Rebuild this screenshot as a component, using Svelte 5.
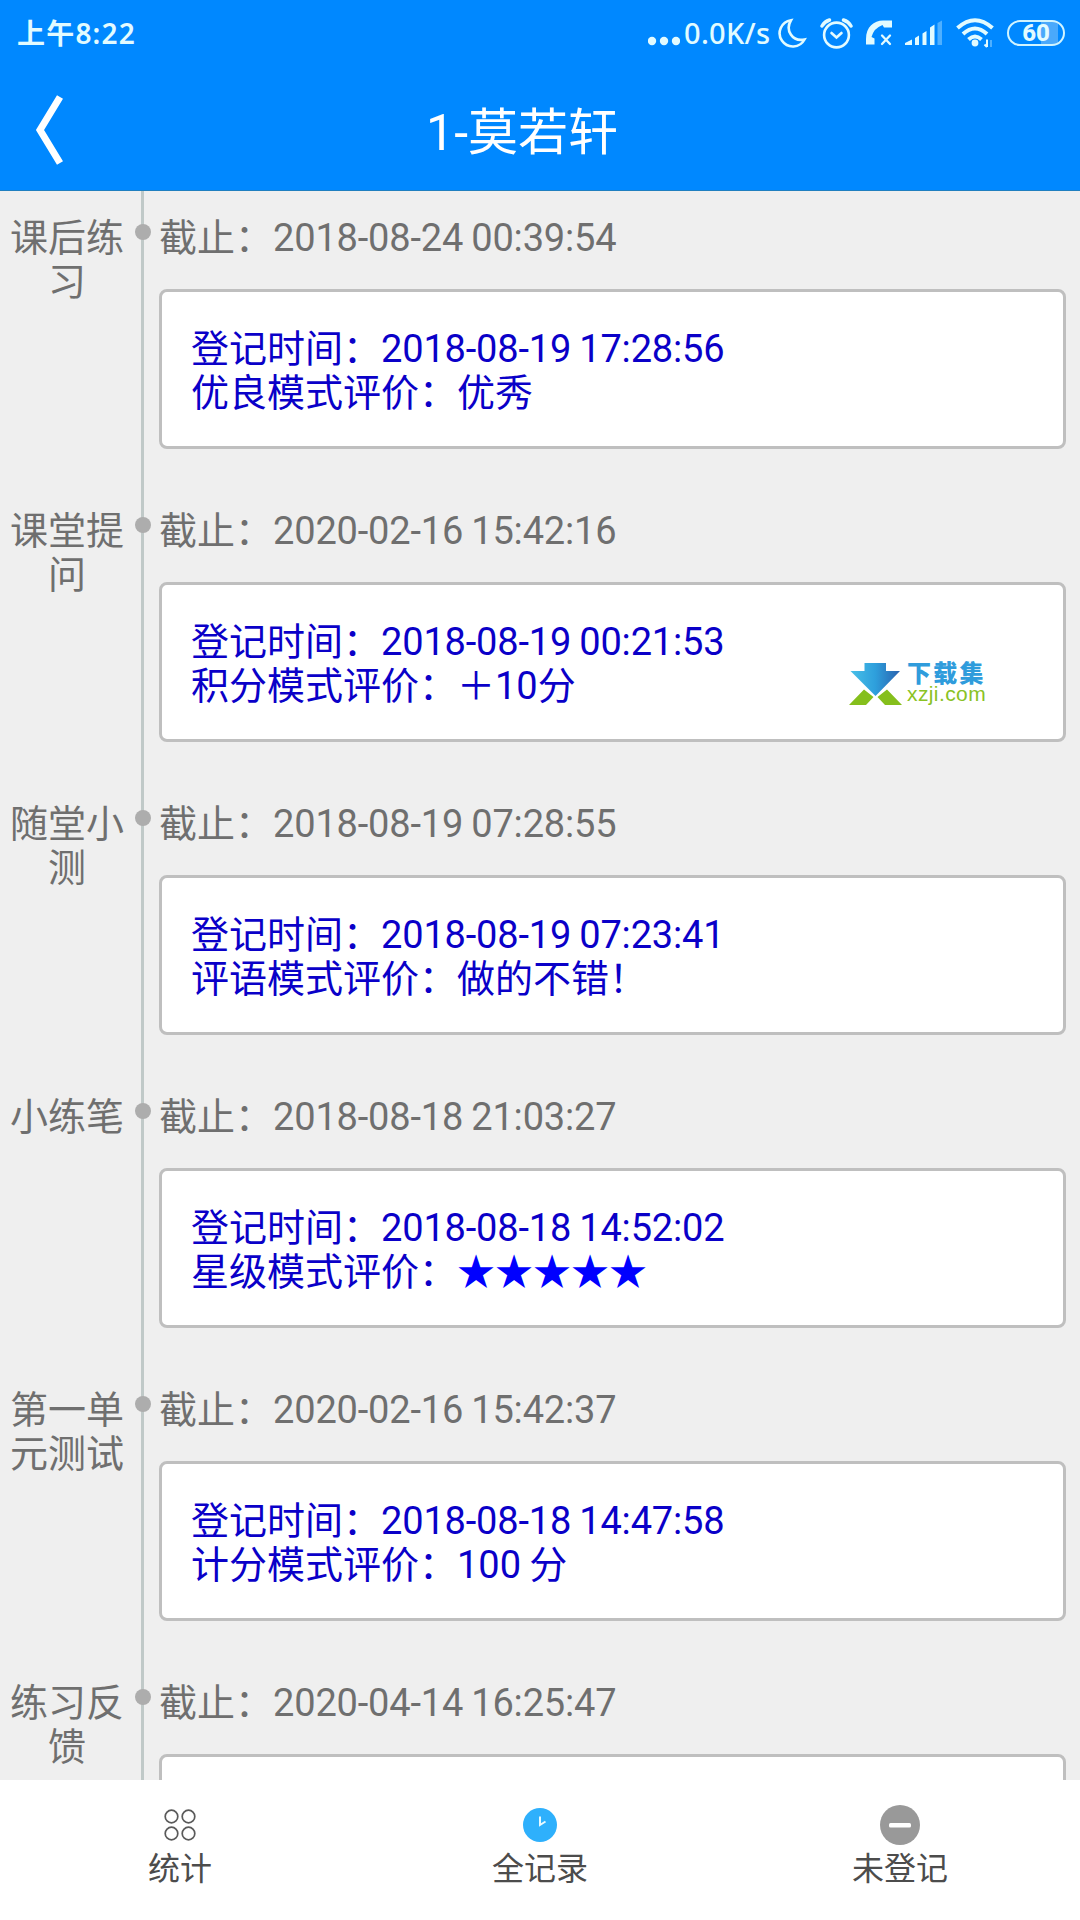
<script lang="ts">
	const records = [
		{ name: '课后练习', deadline: '2018-08-24 00:39:54', time: '2018-08-19 17:28:56', mode: '优良模式评价', value: '优秀' },
		{ name: '课堂提问', deadline: '2020-02-16 15:42:16', time: '2018-08-19 00:21:53', mode: '积分模式评价', value: '＋10分' },
		{ name: '随堂小测', deadline: '2018-08-19 07:28:55', time: '2018-08-19 07:23:41', mode: '评语模式评价', value: '做的不错！' },
		{ name: '小练笔', deadline: '2018-08-18 21:03:27', time: '2018-08-18 14:52:02', mode: '星级模式评价', stars: 5 },
		{ name: '第一单元测试', deadline: '2020-02-16 15:42:37', time: '2018-08-18 14:47:58', mode: '计分模式评价', value: '100 分' },
		{ name: '练习反馈', deadline: '2020-04-14 16:25:47' }
	];
</script>

<div class="screen">
	<header>
		<div class="status">
			<span class="clock">上午8:22</span>
			<div class="indicators">
				<svg class="dots" width="32" height="32" viewBox="0 0 32 32">
					<circle cx="4" cy="24" r="4.2" />
					<circle cx="16" cy="24" r="4.2" />
					<circle cx="28" cy="24" r="4.2" />
				</svg>
				<span class="speed">0.0K/s</span>
				<svg width="30" height="32" viewBox="0 0 30 32">
					<path class="line" d="M14 3.200A13.200 13.200 0 1 0 27.500 22.500C15 25 8 13 14 3.200Z" />
				</svg>
				<svg width="33" height="32" viewBox="0 0 33 32">
					<circle class="line" cx="16.5" cy="18" r="12.4" />
					<path class="line" d="M11.500 16L16.500 20.500L21.500 16" />
					<path class="line bell" d="M2 9Q4.500 4.500 9.500 3M31 9Q28.500 4.500 23.500 3" />
				</svg>
				<svg width="26" height="32" viewBox="0 0 26 32">
					<path d="M0 27.500V22C0 10 8 3.500 17 3.500H26V10.500H18L16.500 8Q8 11 5.500 20L8.500 21.500V27.500Z" />
					<path class="line cross" d="M16 18.500L24 27M24 18.500L16 27" />
				</svg>
				<svg width="38" height="32" viewBox="0 0 38 32">
					<path d="M0 28V26L7 22.500V28ZM10 21L14 18.500V28H10ZM17.500 16.500L21.500 14V28H17.500ZM25 10.500L29.500 7.500V28H25Z" />
					<path class="faint" d="M32.500 6L37 3.500V28H32.500Z" />
				</svg>
				<svg width="38" height="32" viewBox="0 0 38 32">
					<path class="wave" d="M1.500 11Q19 -4.500 36.500 11M7 17Q19 6 31 17M12.500 22.500Q19 16.500 25.500 22.500" />
					<circle cx="19" cy="26" r="3.400" />
					<path class="thin" d="M31 22.500V30M28.500 27.500L31 30" />
					<path class="thin faint" d="M35 30V23" />
				</svg>
				<div class="battery">60</div>
			</div>
		</div>
		<div class="titlebar">
			<svg class="back" width="30" height="72" viewBox="0 0 30 72">
				<path d="M26 3L6 36L26 69" />
			</svg>
			<h1>1-莫若轩</h1>
		</div>
	</header>

	<main>
		{#each records as record}
			<section>
				<div class="name">{record.name}</div>
				<div class="axis"><i></i></div>
				<div class="body">
					<div class="deadline">截止：<span class="date">{record.deadline}</span></div>
					<div class="card">
						{#if record.time}
							<div>登记时间：<span class="date">{record.time}</span></div>
							<div>
								{record.mode}：{#if record.stars}<span class="stars">{'★'.repeat(record.stars)}</span>{:else}{record.value}{/if}
							</div>
						{/if}
					</div>
				</div>
			</section>
		{/each}
	</main>

	<nav>
		<div>
			<svg width="40" height="40" viewBox="0 0 40 40">
				<g class="rings">
					<circle cx="11.500" cy="11.500" r="6.300" />
					<circle cx="28.500" cy="11.500" r="6.300" />
					<circle cx="11.500" cy="28.500" r="6.300" />
					<circle cx="28.500" cy="28.500" r="6.300" />
				</g>
			</svg>
			<span>统计</span>
		</div>
		<div>
			<svg width="40" height="40" viewBox="0 0 40 40">
				<circle cx="20" cy="20" r="17" fill="#2eb0fc" />
				<path class="hands" d="M20 11.500V20L25.500 16.500" />
			</svg>
			<span>全记录</span>
		</div>
		<div>
			<svg width="40" height="40" viewBox="0 0 40 40">
				<circle cx="20" cy="20" r="20" fill="#999" />
				<rect x="9" y="18" width="22" height="4.500" rx="1.500" fill="#fff" />
			</svg>
			<span>未登记</span>
		</div>
	</nav>

	<div class="watermark">
		<svg width="54" height="44" viewBox="0 0 54 44">
			<defs>
				<linearGradient id="arrow" x1="0" y1="0" x2="1" y2="0">
					<stop offset="0" stop-color="#48c0e8" />
					<stop offset="0.5" stop-color="#2e9fdc" />
					<stop offset="1" stop-color="#2a62ae" />
				</linearGradient>
			</defs>
			<path fill="url(#arrow)" d="M15.500 0H37V8H51L26.500 33L1.500 8H15.500Z" />
			<path fill="#85bf1c" d="M0 42L15 26.500L24.500 34L17 42ZM53 42L38 26.500L28.500 34L36 42Z" />
		</svg>
		<div>
			<b>下载集</b>
			<span>xzji.com</span>
		</div>
	</div>
</div>

<style>
	:global(body) {
		background: #efefef;
	}

	.screen {
		position: relative;
		display: flex;
		flex-direction: column;
		width: 1080px;
		height: 1920px;
		overflow: hidden;
		font-family: Roboto, 'Noto Sans CJK SC', sans-serif;
		font-size: 38px;
		line-height: 44px;
	}

	header {
		flex: none;
		height: 191px;
		box-sizing: border-box;
		border-bottom: 1px solid #1f7fc0;
		background: #0088ff;
		color: #fff;
	}

	.status {
		display: flex;
		justify-content: space-between;
		align-items: center;
		height: 66px;
		padding: 0 15px 0 17px;
		color: #e2fbff;
		font-family: 'Noto Sans', 'Noto Sans CJK SC', sans-serif;
		font-size: 28px;
		font-weight: 600;
	}

	.clock {
		letter-spacing: 1.2px;
	}

	.indicators {
		display: flex;
		align-items: center;
		gap: 13px;
	}

	.indicators svg {
		fill: #e2fbff;
	}

	.indicators .dots {
		margin-right: -9px;
	}

	.speed {
		width: 86px;
		margin-right: -6px;
		font-size: 29px;
		font-weight: 500;
		letter-spacing: 0.3px;
	}

	.indicators .line {
		fill: none;
		stroke: #e2fbff;
		stroke-width: 2.6;
		stroke-linecap: round;
	}

	.indicators .bell {
		stroke-width: 3.4;
	}

	.indicators .cross {
		stroke-width: 2.3;
	}

	.indicators .wave {
		fill: none;
		stroke: #e2fbff;
		stroke-width: 4;
	}

	.indicators .thin {
		fill: none;
		stroke: #e2fbff;
		stroke-width: 2;
	}

	.indicators .faint {
		opacity: 0.35;
	}

	.battery {
		width: 58px;
		height: 26px;
		box-sizing: border-box;
		border: 2.5px solid #d0f4ff;
		border-radius: 13px;
		background: linear-gradient(90deg, transparent 60%, #4aa9fb 60%, #4aa9fb 90%, transparent 90%);
		font-family: Roboto, sans-serif;
		font-size: 24px;
		font-weight: 800;
		line-height: 23px;
		text-align: center;
	}

	.titlebar {
		display: flex;
		align-items: flex-start;
		padding: 28px 36px 0 34px;
	}

	.back {
		fill: none;
		stroke: #fff;
		stroke-width: 7;
	}

	h1 {
		flex: 1;
		margin: 10px 0 0;
		padding-right: 64px;
		font-size: 50px;
		font-weight: 400;
		line-height: 58px;
		text-align: center;
	}

	main {
		flex: 1;
		min-height: 0;
		overflow: hidden;
		background: #efefef;
		color: #6f6f6f;
		word-spacing: -1.2px;
	}

	section {
		display: flex;
		height: 293px;
	}

	.name {
		width: 124px;
		padding: 25px 0 0 10px;
		box-sizing: border-box;
		flex: none;
		text-align: center;
		line-break: anywhere;
	}

	.axis {
		display: flex;
		justify-content: center;
		width: 15px;
		margin: 0 9px 0 11px;
		background: linear-gradient(#c0c9c8, #c0c9c8) center / 3px 100% no-repeat;
	}

	.axis i {
		flex: none;
		width: 16px;
		height: 16px;
		margin-top: 33px;
		border-radius: 50%;
		background: #adadad;
	}

	.body {
		flex: 1;
		padding: 25px 14px 0 0;
	}

	.date {
		letter-spacing: -0.17px;
	}

	.card {
		height: 160px;
		margin-top: 29px;
		padding: 35px 29px 0;
		box-sizing: border-box;
		border: 3px solid #bfbfbf;
		border-radius: 8px;
		background: #fff;
		color: #0a00c8;
	}

	.stars {
		color: #00f;
	}

	nav {
		display: flex;
		flex: none;
		height: 140px;
		background: #fff;
		color: #4c4c4c;
		font-size: 32px;
		line-height: 40px;
	}

	nav > div {
		flex: 1;
		display: flex;
		flex-direction: column;
		align-items: center;
		gap: 4px;
		padding-top: 25px;
	}

	.rings {
		fill: none;
		stroke: #5a5a5a;
		stroke-width: 1.7;
	}

	.hands {
		fill: none;
		stroke: #e8faff;
		stroke-width: 2;
	}

	.watermark {
		position: absolute;
		left: 849px;
		top: 663px;
		display: flex;
		gap: 4px;
	}

	.watermark div {
		display: flex;
		flex-direction: column;
	}

	.watermark b {
		color: #2f9cdc;
		font-size: 24px;
		font-weight: 900;
		letter-spacing: 2.3px;
		line-height: 22px;
	}

	.watermark span {
		color: #8ac224;
		font-family: 'Liberation Sans', sans-serif;
		font-size: 21px;
		letter-spacing: 0.4px;
		line-height: 18px;
	}
</style>
